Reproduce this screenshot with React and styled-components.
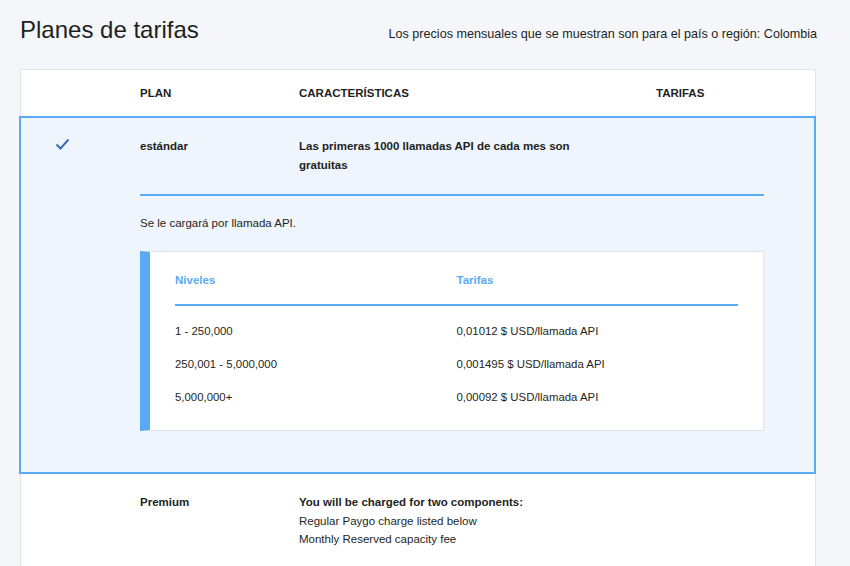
import React from "react";
import styled, { createGlobalStyle, css } from "styled-components";

const Global = createGlobalStyle`
  html, body { margin: 0; padding: 0; overflow: hidden; }
  body {
    background: #f4f6fa;
    font-family: "Liberation Sans", Arial, Helvetica, sans-serif;
    color: #1e1f22;
  }
`;

const Page = styled.div`
  padding: 16px 33px 0 20px;
`;

const TitleRow = styled.div`
  display: flex;
  justify-content: space-between;
  align-items: baseline;
  margin-bottom: 25px;
`;

const Title = styled.h1`
  margin: 0;
  font-size: 24px;
  font-weight: 400;
  line-height: 28px;
  color: #1e1f22;
`;

const Note = styled.p`
  margin: 0;
  font-size: 12.6px;
  color: #1e1f22;
`;

const Table = styled.div`
  background: #fff;
  border: 1px solid #dfe3ea;
  border-bottom: none;
  margin-right: 1px;
`;

const cols = css`
  display: grid;
  grid-template-columns: 119px 159px 357px 1fr;
`;

const HeaderRow = styled.div`
  ${cols};
  height: 46px;
  align-items: center;
  font-size: 11.5px;
  font-weight: 700;
  text-transform: uppercase;
`;

const SelectedRow = styled.div`
  margin: 0 -1px 0 -2px;
  border: 2px solid #5aaaf6;
  background: #eef5fd;
  padding: 19px 0 41px;
`;

const PlanGrid = styled.div`
  ${cols};
  font-size: 11.5px;
  line-height: 19px;
`;

const CheckCell = styled.div`
  padding-left: 34px;
  padding-top: 1px;
  color: #3b6cb3;
`;

const PlanName = styled.div`
  font-weight: 700;
`;

const Features = styled.div`
  max-width: 300px;
  font-weight: ${(p) => (p.$bold ? 700 : 400)};
`;

const FeatureLine = styled.div`
  font-weight: ${(p) => (p.$bold ? 700 : 400)};
`;

const Detail = styled.div`
  margin: 19px 50px 0 119px;
  border-top: 2px solid #5aaaf6;
`;

const DetailText = styled.p`
  margin: 0;
  padding-top: 18px;
  font-size: 11.5px;
  line-height: 19px;
`;

const TierCard = styled.div`
  margin-top: 18px;
  background: #fff;
  border: 1px solid #dfe3ea;
  border-left: 10px solid #5aaaf6;
  padding: 0 25px;
`;

const TierHead = styled.div`
  display: grid;
  grid-template-columns: 1fr 1fr;
  padding: 19px 0 15px;
  border-bottom: 2px solid #5aaaf6;
  color: #5aaaf6;
  font-weight: 700;
  font-size: 11.5px;
  line-height: 18px;
`;

const TierBody = styled.div`
  padding: 8px 0 17px;
`;

const TierRow = styled.div`
  display: grid;
  grid-template-columns: 1fr 1fr;
  align-items: center;
  height: 33px;
  font-size: 11.4px;
`;

const PlainRow = styled.div`
  ${cols};
  padding: 19px 0 30px;
  font-size: 11.5px;
  line-height: 18.5px;
`;

const Check = () => (
  <svg width="15" height="13" viewBox="0 0 15 13" fill="none">
    <path d="M1.5 6.5 L5.5 10.5 L13.5 1.5" stroke="currentColor" strokeWidth="2" />
  </svg>
);

const tiers = [
  ["1 - 250,000", "0,01012 $ USD/llamada API"],
  ["250,001 - 5,000,000", "0,001495 $ USD/llamada API"],
  ["5,000,000+", "0,00092 $ USD/llamada API"],
];

export default function App() {
  return (
    <>
      <Global />
      <Page>
        <TitleRow>
          <Title>Planes de tarifas</Title>
          <Note>Los precios mensuales que se muestran son para el país o región: Colombia</Note>
        </TitleRow>
        <Table>
          <HeaderRow>
            <div />
            <div>Plan</div>
            <div>Características</div>
            <div>Tarifas</div>
          </HeaderRow>
          <SelectedRow>
            <PlanGrid>
              <CheckCell>
                <Check />
              </CheckCell>
              <PlanName>estándar</PlanName>
              <Features $bold>Las primeras 1000 llamadas API de cada mes son gratuitas</Features>
              <div />
            </PlanGrid>
            <Detail>
              <DetailText>Se le cargará por llamada API.</DetailText>
              <TierCard>
                <TierHead>
                  <div>Niveles</div>
                  <div>Tarifas</div>
                </TierHead>
                <TierBody>
                  {tiers.map(([lvl, price]) => (
                    <TierRow key={lvl}>
                      <div>{lvl}</div>
                      <div>{price}</div>
                    </TierRow>
                  ))}
                </TierBody>
              </TierCard>
            </Detail>
          </SelectedRow>
          <PlainRow>
            <div />
            <PlanName>Premium</PlanName>
            <Features>
              <FeatureLine $bold>You will be charged for two components:</FeatureLine>
              <FeatureLine>Regular Paygo charge listed below</FeatureLine>
              <FeatureLine>Monthly Reserved capacity fee</FeatureLine>
            </Features>
            <div />
          </PlainRow>
        </Table>
      </Page>
    </>
  );
}
